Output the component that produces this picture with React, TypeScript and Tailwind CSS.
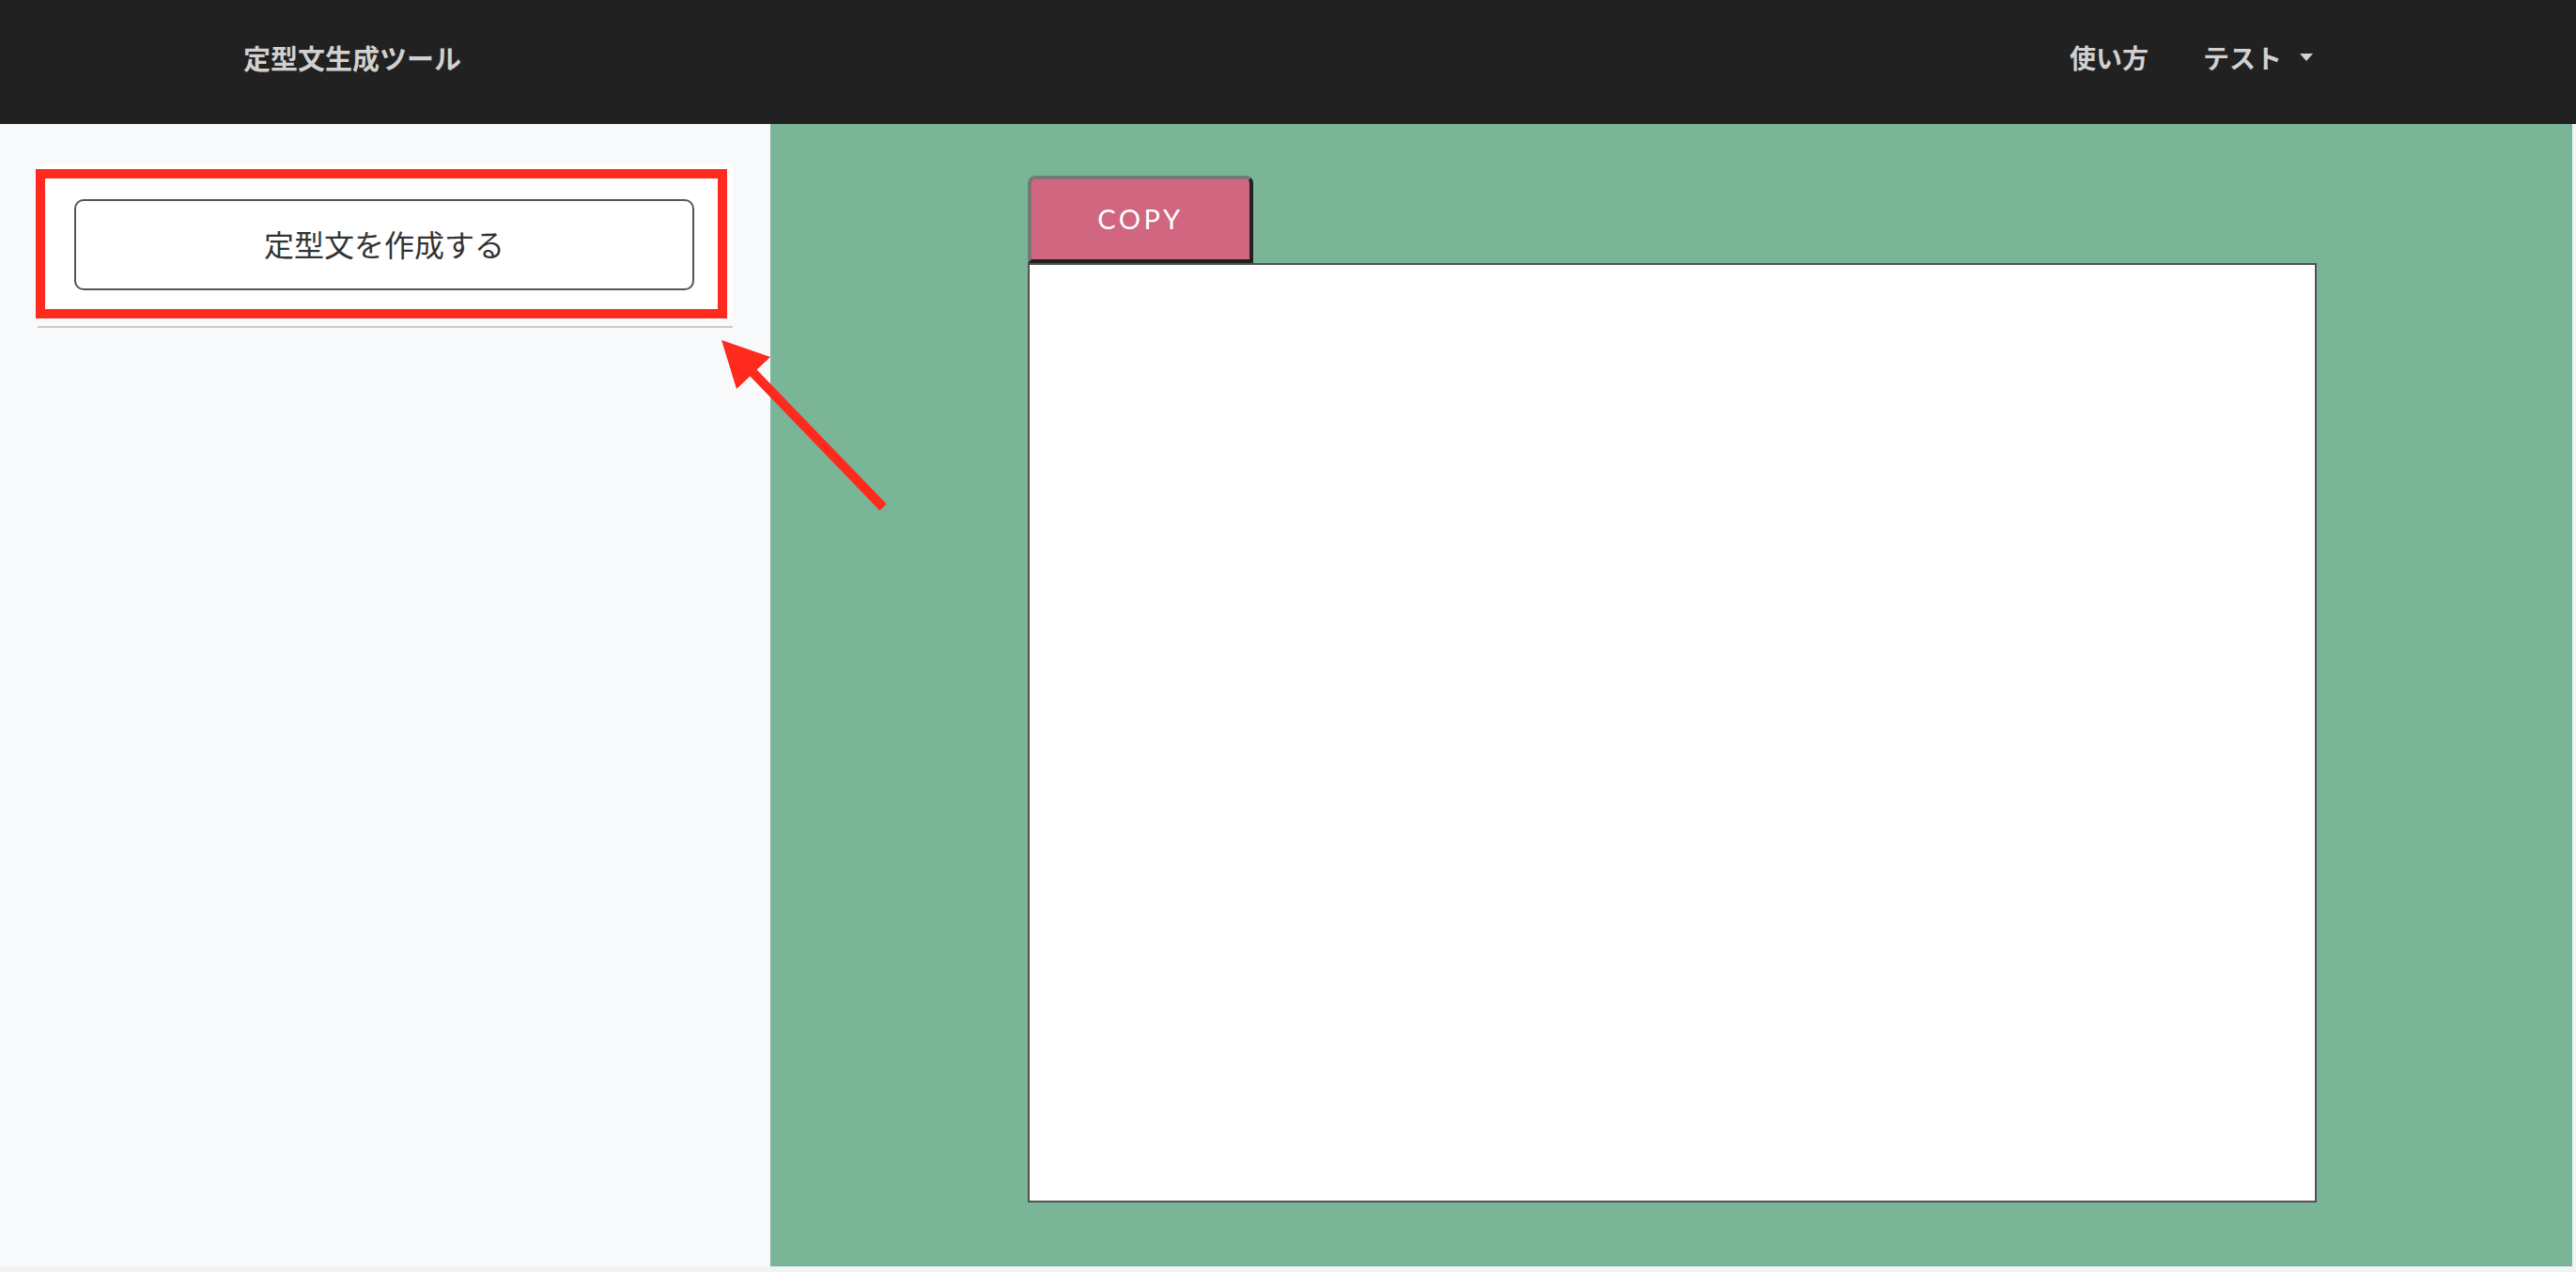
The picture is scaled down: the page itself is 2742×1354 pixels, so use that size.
import React from "react";

export default function App() {
  return (
    <div
      className="relative w-[2742px] h-[1354px] bg-[#f2f3f5] overflow-hidden"
      style={{ fontFamily: '"Noto Sans CJK JP", "Noto Sans", sans-serif' }}
    >
      <header className="h-[132px] w-full bg-[#212121] flex items-center justify-between pl-[259px] pr-[280px] pb-[10px]">
        <div className="text-[29px] font-bold text-[#d0d0d0] leading-none">定型文生成ツール</div>
        <nav className="flex items-center text-[28px] font-bold text-[#d0d0d0] leading-none">
          <span>使い方</span>
          <span className="ml-[58px]">テスト</span>
          <span className="ml-[19px] w-0 h-0 border-l-[7.5px] border-r-[7.5px] border-t-[8px] border-l-transparent border-r-transparent border-t-[#d0d0d0]" />
        </nav>
      </header>

      <div className="flex w-[2738px] h-[1216px]">
        <aside className="w-[820px] shrink-0 bg-[#f8f9fa] px-[40px] pt-[42px]">
          <div className="relative bg-white rounded-[6px] h-[167px] pt-[38px] pl-[39px] pr-[41px]">
            <button className="w-full h-[97px] border-2 border-[#555] rounded-[10px] bg-white text-[32px] text-[#333] leading-none pb-[4px]">
              定型文を作成する
            </button>
            <div className="absolute left-[-2px] top-[6px] w-[736px] h-[159px] border-[10px] border-[#ff2a1e] pointer-events-none" />
          </div>
          <div className="mt-[6px] h-[2px] bg-[#c9c9c9]" />
        </aside>

        <main className="flex-1 bg-[#7ab598] pl-[274px] pt-[55px]">
          <div
            className="w-[240px] h-[93px] bg-[#d0667f] border-4 border-t-[#777] border-l-[#777] border-r-[#222] border-b-[#222] rounded-t-[8px] flex items-center justify-center text-white text-[29px] tracking-[3.5px] leading-none pb-[2px]"
            style={{ fontFamily: 'Lato, "Open Sans", sans-serif' }}
          >
            COPY
          </div>
          <textarea className="block w-[1372px] h-[1000px] border-2 border-[#505050] bg-white resize-none outline-none" />
        </main>
      </div>

      <svg
        className="absolute left-0 top-0 pointer-events-none"
        width="2742"
        height="1354"
        viewBox="0 0 2742 1354"
      >
        <polygon
          points="768,362 820,380 805.6,393.5 943.6,536.5 936.4,543.5 798.4,400.5 784,414"
          fill="#ff2a1e"
        />
      </svg>
    </div>
  );
}
